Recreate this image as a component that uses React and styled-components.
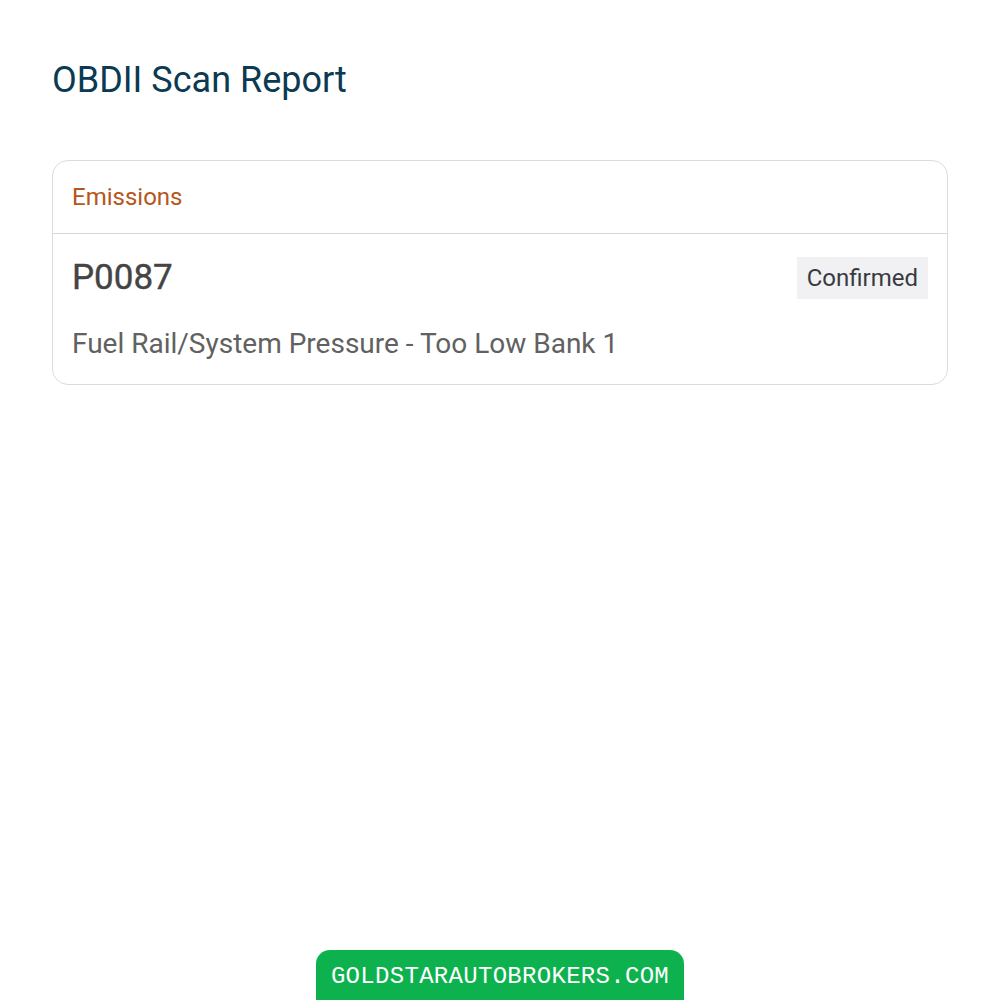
import React from 'react';
import styled, { createGlobalStyle } from 'styled-components';

const GlobalStyle = createGlobalStyle`
  html, body {
    margin: 0;
    padding: 0;
    background: #ffffff;
    font-family: 'Roboto', 'Liberation Sans', sans-serif;
  }
`;

const Page = styled.div`
  min-height: 1000px;
  display: flex;
  flex-direction: column;
  padding: 0 52px;
  box-sizing: border-box;
`;

const Title = styled.h1`
  margin: 58px 0 0;
  font-size: 36px;
  font-weight: 400;
  line-height: 44px;
  color: #0b3a52;
`;

const Card = styled.section`
  margin-top: 58px;
  border: 1px solid #dcdcdc;
  border-radius: 16px;
  background: #fff;
`;

const CardHeader = styled.div`
  padding: 23px 19px 23px;
  border-bottom: 1px solid #d6d6d6;
  font-size: 24px;
  line-height: 26px;
  color: #b5561b;
`;

const CardBody = styled.div`
  padding: 23px 19px 22px;
  display: flex;
  flex-direction: column;
  gap: 27px;
`;

const Row = styled.div`
  display: flex;
  justify-content: space-between;
  align-items: center;
`;

const Code = styled.div`
  font-size: 35px;
  font-weight: 400;
  line-height: 42px;
  color: #444444;
  -webkit-text-stroke: 0.4px #444444;
`;

const Badge = styled.span`
  background: #f1f1f4;
  color: #3a3a42;
  font-size: 24px;
  line-height: 42px;
  padding: 0 10px;
`;

const Description = styled.div`
  font-size: 28px;
  line-height: 36px;
  color: #616161;
`;

const Spacer = styled.div`
  flex: 1;
`;

const Footer = styled.div`
  align-self: center;
  width: 368px;
  height: 50px;
  box-sizing: border-box;
  padding-top: 14px;
  background: #0db24f;
  border-radius: 14px 14px 0 0;
  color: #ffffff;
  font-family: 'Liberation Mono', 'Courier New', monospace;
  font-size: 24px;
  line-height: 26px;
  text-align: center;
  letter-spacing: 0.3px;
`;

export default function App() {
  return (
    <>
      <GlobalStyle />
      <Page>
        <Title>OBDII Scan Report</Title>
        <Card>
          <CardHeader>Emissions</CardHeader>
          <CardBody>
            <Row>
              <Code>P0087</Code>
              <Badge>Confirmed</Badge>
            </Row>
            <Description>Fuel Rail/System Pressure - Too Low Bank 1</Description>
          </CardBody>
        </Card>
        <Spacer />
        <Footer>GOLDSTARAUTOBROKERS.COM</Footer>
      </Page>
    </>
  );
}
